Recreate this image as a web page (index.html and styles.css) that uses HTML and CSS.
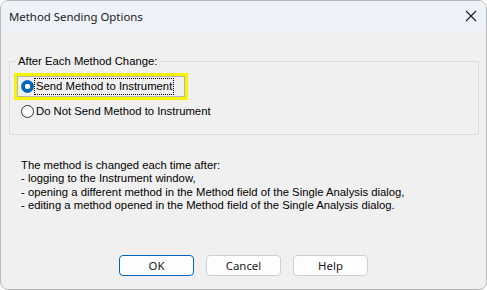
FILE: index.html
```html
<!DOCTYPE html>
<html lang="en">
<head>
    <meta charset="UTF-8">
    <title>Method Sending Options</title>
    <link rel="stylesheet" href="styles.css">
</head>
<body>
    <div class="window">
        <div class="titlebar">
            <span class="title">Method Sending Options</span>
            <svg class="close" width="12" height="12" viewBox="0 0 12 12">
                <path d="M1 1 L11 11 M11 1 L1 11" stroke="#1a1a1a" stroke-width="1.1" fill="none"/>
            </svg>
        </div>
        <div class="content">
            <fieldset class="group">
                <legend>After Each Method Change:</legend>
                <div class="highlight">
                    <label class="option">
                        <span class="radio checked"></span>
                        <span class="focus">Send Method to Instrument</span>
                    </label>
                </div>
                <label class="option plain">
                    <span class="radio"></span>
                    <span>Do Not Send Method to Instrument</span>
                </label>
            </fieldset>
            <div class="note">
                <div>The method is changed each time after:</div>
                <div>- logging to the Instrument window,</div>
                <div>- opening a different method in the Method field of the Single Analysis dialog,</div>
                <div>- editing a method opened in the Method field of the Single Analysis dialog.</div>
            </div>
            <div class="buttons">
                <button class="default">OK</button>
                <button>Cancel</button>
                <button>Help</button>
            </div>
        </div>
    </div>
</body>
</html>
```

FILE: styles.css
```css
body {
    margin: 0;
    background: #ffffff;
    font-family: "Liberation Sans", Arial, sans-serif;
    font-size: 11.3px;
    color: #000;
}
.window {
    width: 485px;
    height: 288px;
    border: 1px solid #b9b9b9;
    border-radius: 8px;
    overflow: hidden;
    background: #f0f0f0;
    display: flex;
    flex-direction: column;
}
.titlebar {
    height: 30px;
    background: #eef3f9;
    display: flex;
    align-items: center;
    justify-content: space-between;
    padding: 0 9px 0 8px;
}
.title {
    font-family: "Noto Sans", sans-serif;
    font-size: 11.4px;
    color: #1a1a1a;
}
.content {
    flex: 1;
    padding: 23px 7px 0 8px;
    display: flex;
    flex-direction: column;
}
.group {
    margin: 0;
    border: 1px solid #dcdcdc;
    border-radius: 0;
    padding: 5px 4px 0 4px;
    height: 81px;
    box-sizing: border-box;
}
.group legend {
    padding: 0 2px;
    margin-left: 2px;
    line-height: 14px;
}
.highlight {
    width: 168px;
    height: 21px;
    border: 3px solid #f5f500;
    display: flex;
    align-items: center;
}
.option {
    display: flex;
    align-items: center;
    height: 21px;
    padding-left: 2px;
    outline: 1px solid #b5b5b5;
    outline-offset: -1px;
    width: 100%;
}
.option.plain {
    outline: none;
    padding-left: 5px;
    height: 20px;
    margin-top: 1px;
}
.radio {
    width: 11px;
    height: 11px;
    border: 1px solid #333;
    border-radius: 50%;
    background: #fff;
    margin-right: 2px;
    margin-left: 2px;
    flex-shrink: 0;
}
.radio.checked {
    border-color: #0067c0;
    background: radial-gradient(circle, #fff 0 2.5px, #0067c0 3px);
    margin-right: 1px;
}
.focus {
    outline: 1px dotted #000;
    padding: 0 1px;
    line-height: 15px;
}
.note {
    padding: 24px 0 0 12px;
    line-height: 13.3px;
}
.buttons {
    margin-top: auto;
    margin-bottom: 13px;
    display: flex;
    justify-content: center;
    gap: 12px;
    padding-right: 1px;
}
button {
    width: 75px;
    height: 21px;
    border: 1px solid #d0d0d0;
    border-radius: 4px;
    background: #fdfdfd;
    font-family: "Noto Sans", sans-serif;
    font-size: 11.4px;
    padding: 0;
    color: #1a1a1a;
}
button.default {
    border-color: #0067c0;
}
```
